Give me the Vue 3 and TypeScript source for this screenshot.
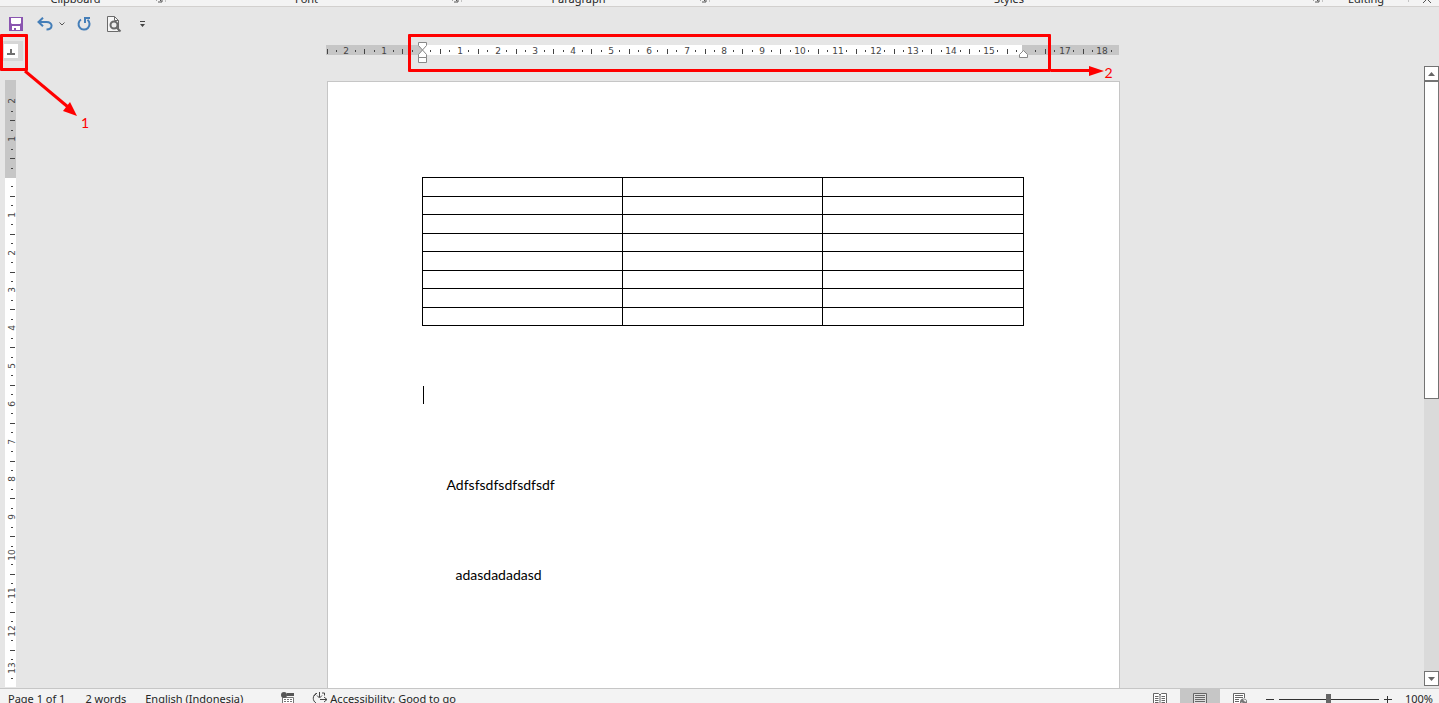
<script setup lang="ts">
import { computed, ref } from 'vue'

interface Mark {
  pos: number
  kind: 'label' | 'half' | 'dot'
  text: string
}

const PX_PER_CM = 37.8

/* Marks every quarter centimetre, counted outwards from the margin. */
function marks(origin: number, from: number, to: number, skip: number[] = []): Mark[] {
  const out: Mark[] = []
  for (let q = from * 4; q <= to * 4; q++) {
    if (q === 0 || skip.includes(q / 4)) continue
    const kind = q % 4 === 0 ? 'label' : q % 2 === 0 ? 'half' : 'dot'
    out.push({ pos: Math.round(origin + (q * PX_PER_CM) / 4), kind, text: String(Math.abs(q / 4)) })
  }
  return out
}

const across = marks(95, -2.5, 18.25, [16])
const down = marks(97, -2, 13.5)

const groups = [
  { name: 'Clipboard', cls: 'clipboard', launcher: true },
  { name: 'Font', cls: 'font', launcher: true },
  { name: 'Paragraph', cls: 'paragraph', launcher: true },
  { name: 'Styles', cls: 'styles', launcher: true },
  { name: 'Editing', cls: 'editing', launcher: false },
]

const zoom = ref(100)
const zoomText = computed(() => `${zoom.value}%`)
</script>

<template>
  <div class="app">
    <header class="ribbon">
      <div v-for="g in groups" :key="g.name" class="group" :class="g.cls">
        <span class="group-name">{{ g.name }}</span>
        <button v-if="g.launcher" class="launcher" :aria-label="`${g.name} settings`">
          <svg width="8" height="8" viewBox="0 0 8 8"><path d="M1.500 5.500V.5h5M3 3l3 3M7 3v4H3" /></svg>
        </button>
      </div>
      <button class="collapse" aria-label="Collapse the ribbon">
        <svg width="12" height="8" viewBox="0 0 12 8"><path d="M2 7l4-4 4 4" /></svg>
      </button>
    </header>

    <nav class="quick">
      <button aria-label="Save">
        <svg width="14" height="14" viewBox="0 0 14 14">
          <path fill="#8a55b0" d="M0 0h14v14H0z" />
          <path fill="#fff" d="M2 1h10v5l-1 1H3L2 6zM3 9h8v4H7v-2H5v2H3z" />
        </svg>
      </button>
      <button class="undo" aria-label="Undo">
        <svg width="16" height="14" viewBox="0 0 16 14">
          <path fill="none" stroke="#447eb8" stroke-width="2" d="M6 .7L1.500 5 6 9.300M2 5h7.500c7 0 6.500 7.500 0 7.500" />
        </svg>
      </button>
      <button class="undo-more" aria-label="Undo list">
        <svg width="6" height="4" viewBox="0 0 6 4"><path fill="none" stroke="#555" d="M.5.5L3 3 5.500.5" /></svg>
      </button>
      <button class="redo" aria-label="Repeat">
        <svg width="14" height="14" viewBox="0 0 14 14">
          <path fill="none" stroke="#447eb8" stroke-width="2" d="M4 2.500a5.500 5.500 0 1 0 6.500.3M8 6V1h5" />
        </svg>
      </button>
      <button class="preview" aria-label="Print preview">
        <svg width="15" height="17" viewBox="0 0 15 17">
          <path fill="#f6f6f6" stroke="#6b6b6b" d="M.5.5h7l4 4v11H.5z" />
          <path fill="none" stroke="#6b6b6b" d="M7.500.5v4h4" />
          <circle cx="7" cy="9" r="3.500" fill="#eee" stroke="#6b6b6b" stroke-width="2" />
          <path stroke="#6b6b6b" stroke-width="2" d="M9.500 11.500l4 4" />
        </svg>
      </button>
      <button class="customize" aria-label="Customize toolbar">
        <svg width="5" height="6" viewBox="0 0 5 6"><path fill="#444" d="M0 0h5v1H0zM0 3h5L2.500 6z" /></svg>
      </button>
    </nav>

    <main class="workspace">
      <aside class="left">
        <button class="tab-stop" aria-label="Left tab">
          <svg width="14" height="14" viewBox="0 0 14 14"><path fill="#707070" d="M6 5h2v4h3v2H3V9h3z" /></svg>
        </button>
        <div class="v-ruler">
          <svg width="11" height="608">
            <rect class="margin" width="11" height="98" />
            <template v-for="m in down" :key="m.pos">
              <text v-if="m.kind === 'label'" :transform="`translate(10 ${m.pos}) rotate(-90)`">{{ m.text }}</text>
              <rect v-else-if="m.kind === 'half'" class="ink" x="5" :y="m.pos" width="5" height="1" />
              <rect v-else class="ink" x="6" :y="m.pos" width="2" height="1" />
            </template>
          </svg>
        </div>
        <div class="callout one">
          <div class="frame"></div>
          <svg width="56" height="48" viewBox="0 0 56 48">
            <path stroke="#f00" stroke-width="3" d="M1 1l43 36" />
            <path fill="#f00" d="M53 46L39 41l7-9z" />
          </svg>
          <span>1</span>
        </div>
      </aside>

      <section class="canvas">
        <div class="h-ruler">
          <svg width="793" height="24">
            <rect class="margin" y="4" width="793" height="10" />
            <rect fill="#fff" x="96" y="4" width="600" height="10" />
            <template v-for="m in across" :key="m.pos">
              <text v-if="m.kind === 'label'" :x="m.pos + 1" y="13">{{ m.text }}</text>
              <rect v-else-if="m.kind === 'half'" class="ink" :x="m.pos" y="8" width="1" height="5" />
              <rect v-else class="ink" :x="m.pos" y="9" width="1" height="2" />
            </template>
            <path class="handle" d="M92.500 1.500h8v3l-4 4.500-4-4.500zM96.500 9l4 4.500v3h-8v-3zM92.500 16.500h8v5h-8z" />
            <path class="handle" d="M697.500 9.500l4 4v3h-8v-3z" />
          </svg>
          <div class="callout two">
            <div class="frame"></div>
            <svg width="53" height="10" viewBox="0 0 53 10">
              <path fill="#f00" d="M0 3h38V0l15 5-15 5V6H0z" />
            </svg>
            <span>2</span>
          </div>
        </div>
        <article class="page">
          <table aria-label="Document table">
            <tbody>
              <tr v-for="r in 8" :key="r"><td v-for="c in 3" :key="c"></td></tr>
            </tbody>
          </table>
          <div class="caret"></div>
          <p class="first">Adfsfsdfsdfsdfsdf</p>
          <p class="second">adasdadadasd</p>
        </article>
      </section>

      <div class="scrollbar">
        <button aria-label="Scroll up"><svg width="7" height="4" viewBox="0 0 7 4"><path d="M0 4l3.500-4L7 4z" /></svg></button>
        <div class="thumb"></div>
        <button class="bottom" aria-label="Scroll down"><svg width="7" height="4" viewBox="0 0 7 4"><path d="M0 0h7L3.500 4z" /></svg></button>
      </div>
    </main>

    <footer class="status">
      <button class="pages">Page 1 of 1</button>
      <button class="words">2 words</button>
      <button class="language">English (Indonesia)</button>
      <button class="macro" aria-label="Record macro">
        <svg width="13" height="14" viewBox="0 0 13 14">
          <path fill="#555" d="M6 1h7v3H6z" />
          <path fill="#fff" stroke="#777" d="M1.500 5.500h11v8h-11z" />
          <path stroke="#777" d="M3 7.500h2m1 0h2m1 0h2M3 9.500h2m1 0h2m1 0h2M3 11.500h2m1 0h2m1 0h2" />
          <circle cx="3" cy="3" r="3" fill="#555" />
        </svg>
      </button>
      <button class="access">
        <svg width="17" height="14" viewBox="0 0 17 14">
          <path fill="none" stroke="#444" d="M4 1.500a5.500 5.500 0 0 0 0 9.500M2 4l3-3M7.500 0v5M5 3.500l2.500 2.500L10 3.500M10 1h2.500v2.500M8 7.500h7M12 5l3 2.500-3 2.500" />
        </svg>
        <span>Accessibility: Good to go</span>
      </button>
      <div class="views">
        <button aria-label="Read mode">
          <svg width="14" height="13" viewBox="0 0 14 13">
            <path fill="#fff" stroke="#666" d="M.5.5h5L7 2 8.500.5h5v11h-5L7 13l-1.500-1.500h-5zM7 2v11" />
            <path stroke="#666" d="M2 3.500h3.500M2 5.500h3.500M2 7.500h3.500M2 9.500h3.500M8.500 3.500H12M8.500 5.500H12M8.500 7.500H12M8.500 9.500H12" />
          </svg>
        </button>
        <button class="active" aria-label="Print layout">
          <svg width="14" height="13" viewBox="0 0 14 13">
            <path fill="#ddd" stroke="#666" d="M.5.5h13v14H.5z" />
            <path stroke="#666" d="M2 2.500h10M2 4.500h10M2 6.500h10M2 8.500h10M2 10.500h10" />
          </svg>
        </button>
        <button aria-label="Web layout">
          <svg width="14" height="13" viewBox="0 0 14 13">
            <path fill="#fff" stroke="#666" d="M11.500 5V.5H.5v12h6" />
            <path stroke="#666" d="M2 2.500h8M2 4.500h8M2 6.500h4M2 8.500h4M2 10.500h4" />
            <circle cx="10.500" cy="9" r="3.500" fill="#777" />
            <path fill="#eee" d="M10 6l3 1v2l-2-1zM8 9l2 1v1H9z" />
          </svg>
        </button>
      </div>
      <div class="zoom">
        <button aria-label="Zoom out"><svg width="9" height="9" viewBox="0 0 9 9"><path stroke="#333" d="M0 4.500h8" /></svg></button>
        <input v-model.number="zoom" type="range" min="10" max="190" aria-label="Zoom" />
        <button aria-label="Zoom in"><svg width="9" height="9" viewBox="0 0 9 9"><path stroke="#333" d="M1 4.500h8M4.500 1v8" /></svg></button>
        <button class="percent">{{ zoomText }}</button>
      </div>
    </footer>
  </div>
</template>

<style>
body {
  margin: 0;
  overflow: hidden;
}
</style>

<style scoped>
.app {
  display: flex;
  flex-direction: column;
  height: 100vh;
  background: #e6e6e6;
  color: #262626;
  font: 11px/16px 'Noto Sans', 'Open Sans', sans-serif;
}
button {
  display: flex;
  align-items: center;
  justify-content: center;
  flex: none;
  margin: 0;
  padding: 0;
  border: 0;
  background: none;
  color: inherit;
  font: inherit;
}
svg {
  display: block;
  flex: none;
}

.ribbon {
  display: flex;
  align-items: flex-end;
  height: 6px;
  flex: none;
  overflow: hidden;
  background: #f3f3f3;
  border-bottom: 1px solid #d2d0ce;
}
.group {
  display: flex;
  height: 14px;
  align-items: flex-end;
  position: relative;
}
.group::after {
  content: '';
  position: absolute;
  right: 0;
  bottom: 4px;
  height: 10px;
  border-right: 1px solid #c4c4c4;
}
.group-name {
  flex: 1;
  text-align: center;
  line-height: 14px;
}
.launcher {
  width: 15px;
  height: 8px;
  margin-bottom: 3px;
}
.launcher svg,
.collapse svg {
  fill: none;
  stroke: #555;
}
.clipboard { width: 166px; }
.font { width: 296px; }
.paragraph { width: 248px; }
.styles { flex: 1; }
.editing { width: 86px; }
.collapse {
  width: 30px;
  padding: 0 0 2px 6px;
}

.quick {
  display: flex;
  align-items: center;
  height: 34px;
  flex: none;
  padding-left: 9px;
}
.undo { margin-left: 14px; }
.undo-more { margin-left: 6px; }
.redo { margin-left: 12px; }
.preview { margin-left: 16px; }
.customize { margin-left: 18px; }

.workspace {
  display: grid;
  grid-template-columns: 22px 1fr 15px;
  flex: 1;
  min-height: 0;
}
.left {
  position: relative;
  min-height: 0;
  display: flex;
  flex-direction: column;
}
.tab-stop {
  width: 21px;
  height: 20px;
  flex: none;
  margin-left: 2px;
  padding: 0 4px 0 0;
  background: #d6d6d6;
}
.tab-stop svg { background: #fff; }
.v-ruler {
  flex: 1;
  min-height: 0;
  width: 11px;
  margin: 19px 0 1px 5px;
  overflow: hidden;
  background: #fff;
}
.margin { fill: #c6c6c6; }
.ink { fill: #444; }
.v-ruler text,
.h-ruler text {
  fill: #444;
  font-family: 'DejaVu Sans', sans-serif;
  font-size: 9px;
  text-anchor: middle;
}
.handle {
  fill: #fff;
  stroke: #888;
}

.callout {
  position: absolute;
  z-index: 2;
  display: flex;
  pointer-events: none;
  color: #f00;
  font-family: Lato, sans-serif;
  font-size: 14px;
}
.frame {
  box-sizing: border-box;
  flex: none;
  border: 3px solid #f00;
  border-radius: 1px;
}
.one {
  top: -7px;
  left: 0;
}
.one .frame {
  width: 28px;
  height: 37px;
}
.one svg { margin: 36px 0 0 -4px; }
.one span { margin: 81px 0 0 1px; }
.two {
  top: -7px;
  left: 82px;
}
.two .frame {
  width: 643px;
  height: 38px;
}
.two svg { margin-top: 32px; }
.two span { margin: 31px 0 0 1px; }

.canvas {
  display: flex;
  flex-direction: column;
  align-items: center;
  min-width: 0;
  min-height: 0;
}
.h-ruler {
  position: relative;
  width: 793px;
  height: 40px;
  flex: none;
  margin-right: 2px;
}
.page {
  box-sizing: border-box;
  width: 793px;
  flex: 1;
  min-height: 0;
  overflow: hidden;
  padding: 95px 0 0 94px;
  border: 1px solid #c6c6c6;
  border-bottom: 0;
  background: #fff;
  color: #000;
  font-family: Lato, sans-serif;
  font-size: 14px;
  line-height: 18px;
}
table {
  width: 602px;
  table-layout: fixed;
  border-collapse: collapse;
}
td {
  box-sizing: border-box;
  height: 18px;
  padding: 0;
  border: 1px solid #000;
}
tr:nth-child(odd) td { height: 19px; }
.caret {
  width: 1px;
  height: 18px;
  margin: 60px 0 0 1px;
  background: #000;
}
p { margin: 0; }
.first { padding: 72px 0 0 25px; }
.second { padding: 72px 0 0 34px; }

.scrollbar {
  display: flex;
  flex-direction: column;
  min-height: 0;
  margin: 25px 0 2px;
  background: #dadada;
}
.scrollbar button,
.thumb {
  box-sizing: border-box;
  height: 15px;
  border: 1px solid #737373;
  background: #fff;
}
.scrollbar svg { fill: #666; }
.thumb { height: 318px; }
.scrollbar .bottom { margin-top: auto; }

.status {
  display: flex;
  align-items: flex-start;
  box-sizing: border-box;
  height: 15px;
  flex: none;
  overflow: hidden;
  background: #f3f3f3;
  border-top: 1px solid #c6c6c6;
}
.status button { height: 20px; }
.pages { margin-left: 8px; }
.words { margin-left: 20px; }
.language { margin-left: 19px; }
.status .macro { margin-left: 38px; }
.access { margin-left: 18px; }
.access span { margin-left: 1px; }
.views {
  display: flex;
  margin-left: auto;
}
.views button { width: 40px; }
.views .active { background: #c6c6c6; }
.zoom {
  display: flex;
  align-items: center;
  height: 20px;
  margin: 0 6px;
}
.zoom input {
  appearance: none;
  width: 100px;
  height: 12px;
  margin: 0 4px;
  background: linear-gradient(#333, #333) center / 100% 1px no-repeat;
}
.zoom input::-webkit-slider-thumb {
  appearance: none;
  width: 5px;
  height: 11px;
  background: #666;
}
.percent { margin-left: 13px; }
</style>
